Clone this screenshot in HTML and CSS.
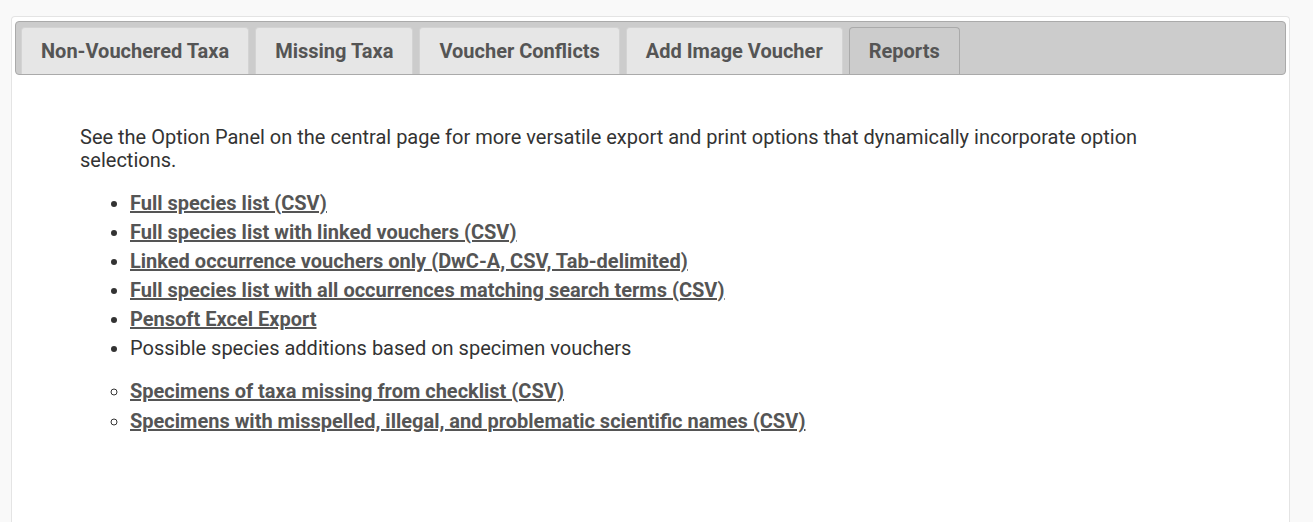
FILE: index.html
```html
<!DOCTYPE html>
<html>
<head>
<meta charset="utf-8">
<link rel="stylesheet" href="styles.css">
</head>
<body>
<div class="panel">
  <div class="tabbar">
    <a class="tab" href="#">Non-Vouchered Taxa</a>
    <a class="tab" href="#">Missing Taxa</a>
    <a class="tab" href="#">Voucher Conflicts</a>
    <a class="tab" href="#">Add Image Voucher</a>
    <a class="tab active" href="#">Reports</a>
  </div>
  <div class="content">
    <p class="intro">See the Option Panel on the central page for more versatile export and print options that dynamically incorporate option selections.</p>
    <ul class="reports">
      <li><a href="#">Full species list (CSV)</a></li>
      <li><a href="#">Full species list with linked vouchers (CSV)</a></li>
      <li><a href="#">Linked occurrence vouchers only (DwC-A, CSV, Tab-delimited)</a></li>
      <li><a href="#">Full species list with all occurrences matching search terms (CSV)</a></li>
      <li><a href="#">Pensoft Excel Export</a></li>
      <li>Possible species additions based on specimen vouchers</li>
    </ul>
    <ul class="reports sub">
      <li><a href="#">Specimens of taxa missing from checklist (CSV)</a></li>
      <li><a href="#">Specimens with misspelled, illegal, and problematic scientific names (CSV)</a></li>
    </ul>
  </div>
</div>
</body>
</html>
```
FILE: styles.css
```css
html, body {
  margin: 0;
  padding: 0;
  height: 100%;
}
body {
  background: #f9f9f9;
  font-family: Roboto, "Liberation Sans", sans-serif;
  color: #333;
  overflow: hidden;
}
.panel {
  margin: 16px 23px 0 11px;
  background: #fff;
  border: 1px solid #e4e4e4;
  border-bottom: 0;
  border-radius: 4px 4px 0 0;
  padding: 4px 3px;
  height: calc(100vh - 21px);
}
.tabbar {
  display: flex;
  gap: 6px;
  background: #ccc;
  border: 1px solid #aaa;
  border-radius: 4px;
  padding: 5px 5px 0 5px;
}
.tab {
  display: block;
  background: #e6e6e6;
  border: 1px solid #d3d3d3;
  border-bottom: 0;
  border-radius: 4px 4px 0 0;
  padding: 12px 19px 11px;
  font-size: 20px;
  font-weight: bold;
  line-height: 23px;
  color: #555;
  text-decoration: none;
}
.tab.active {
  background: #ccc;
  border-color: #aaa;
}
.content {
  padding: 0 0 0 65px;
  font-size: 20px;
  line-height: 23px;
}
.intro {
  margin: 51px 80px 17px 0;
}
.reports {
  margin: 0;
  padding-left: 50px;
  line-height: 29px;
}
.reports.sub {
  list-style-type: circle;
  margin-top: 13px;
  line-height: 30px;
}
.reports a {
  color: #555;
  font-weight: bold;
  text-decoration: underline;
}
```
